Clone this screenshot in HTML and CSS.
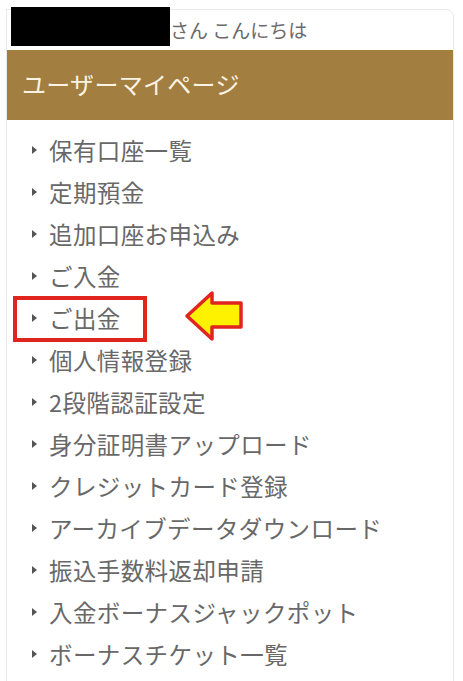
FILE: index.html
```html
<!DOCTYPE html>
<html lang="ja">
<head>
<meta charset="utf-8">
<title>ユーザーマイページ</title>
<link rel="stylesheet" href="styles.css">
</head>
<body>
<div class="card">
  <div class="greeting">
    <span class="redact"></span>
    <span class="hello">さん こんにちは</span>
  </div>
  <div class="header">ユーザーマイページ</div>
  <ul class="menu">
    <li><span class="mark"></span>保有口座一覧</li>
    <li><span class="mark"></span>定期預金</li>
    <li><span class="mark"></span>追加口座お申込み</li>
    <li><span class="mark"></span>ご入金</li>
    <li class="target"><span class="mark"></span>ご出金
      <span class="hl-box"></span>
      <svg class="hl-arrow" width="62" height="52" viewBox="0 0 62 52">
        <polygon points="4,26 29,3 29,13 58,13 58,37 29,37 29,49" fill="#fff200" stroke="#e0251f" stroke-width="3.5" stroke-linejoin="round"/>
      </svg>
    </li>
    <li><span class="mark"></span>個人情報登録</li>
    <li><span class="mark"></span>2段階認証設定</li>
    <li><span class="mark"></span>身分証明書アップロード</li>
    <li><span class="mark"></span>クレジットカード登録</li>
    <li><span class="mark"></span>アーカイブデータダウンロード</li>
    <li><span class="mark"></span>振込手数料返却申請</li>
    <li><span class="mark"></span>入金ボーナスジャックポット</li>
    <li><span class="mark"></span>ボーナスチケット一覧</li>
  </ul>
</div>
</body>
</html>
```
FILE: styles.css
```css
html, body {
  margin: 0;
  padding: 0;
  background: #ffffff;
}
body {
  font-family: "Noto Sans CJK JP", "Noto Sans", sans-serif;
  color: #666666;
}
.card {
  margin: 9px 9px 0 6px;
  border: 1px solid #e9e9e9;
  border-top-right-radius: 8px;
  background: #fff;
}
.greeting {
  height: 40px;
  display: flex;
  align-items: flex-start;
  padding-left: 4px;
}
.redact {
  display: block;
  width: 159px;
  height: 39px;
  margin-top: -3px;
  background: #000;
}
.hello {
  font-size: 19px;
  line-height: 40px;
  color: #6a6a6a;
}
.header {
  height: 70px;
  background: #a27e40;
  color: #fbf3e2;
  font-size: 24px;
  line-height: 67px;
  padding-left: 15px;
  letter-spacing: 0.3px;
}
.menu {
  list-style: none;
  margin: 0;
  padding: 9px 0 20px 0;
}
.menu li {
  position: relative;
  height: 42px;
  line-height: 42px;
  font-size: 23.5px;
  padding-left: 42px;
  color: #686868;
  letter-spacing: 0.4px;
}
.mark {
  position: absolute;
  left: 25px;
  top: 17px;
  width: 0;
  height: 0;
  border-top: 4px solid transparent;
  border-bottom: 4px solid transparent;
  border-left: 5px solid #555555;
}
.target .hl-box {
  top: -1px;
}
.hl-box {
  position: absolute;
  left: 6px;
  width: 126px;
  height: 38px;
  border: 4px solid #e0251f;
}
.hl-arrow {
  position: absolute;
  left: 176px;
  top: -7px;
}
```
